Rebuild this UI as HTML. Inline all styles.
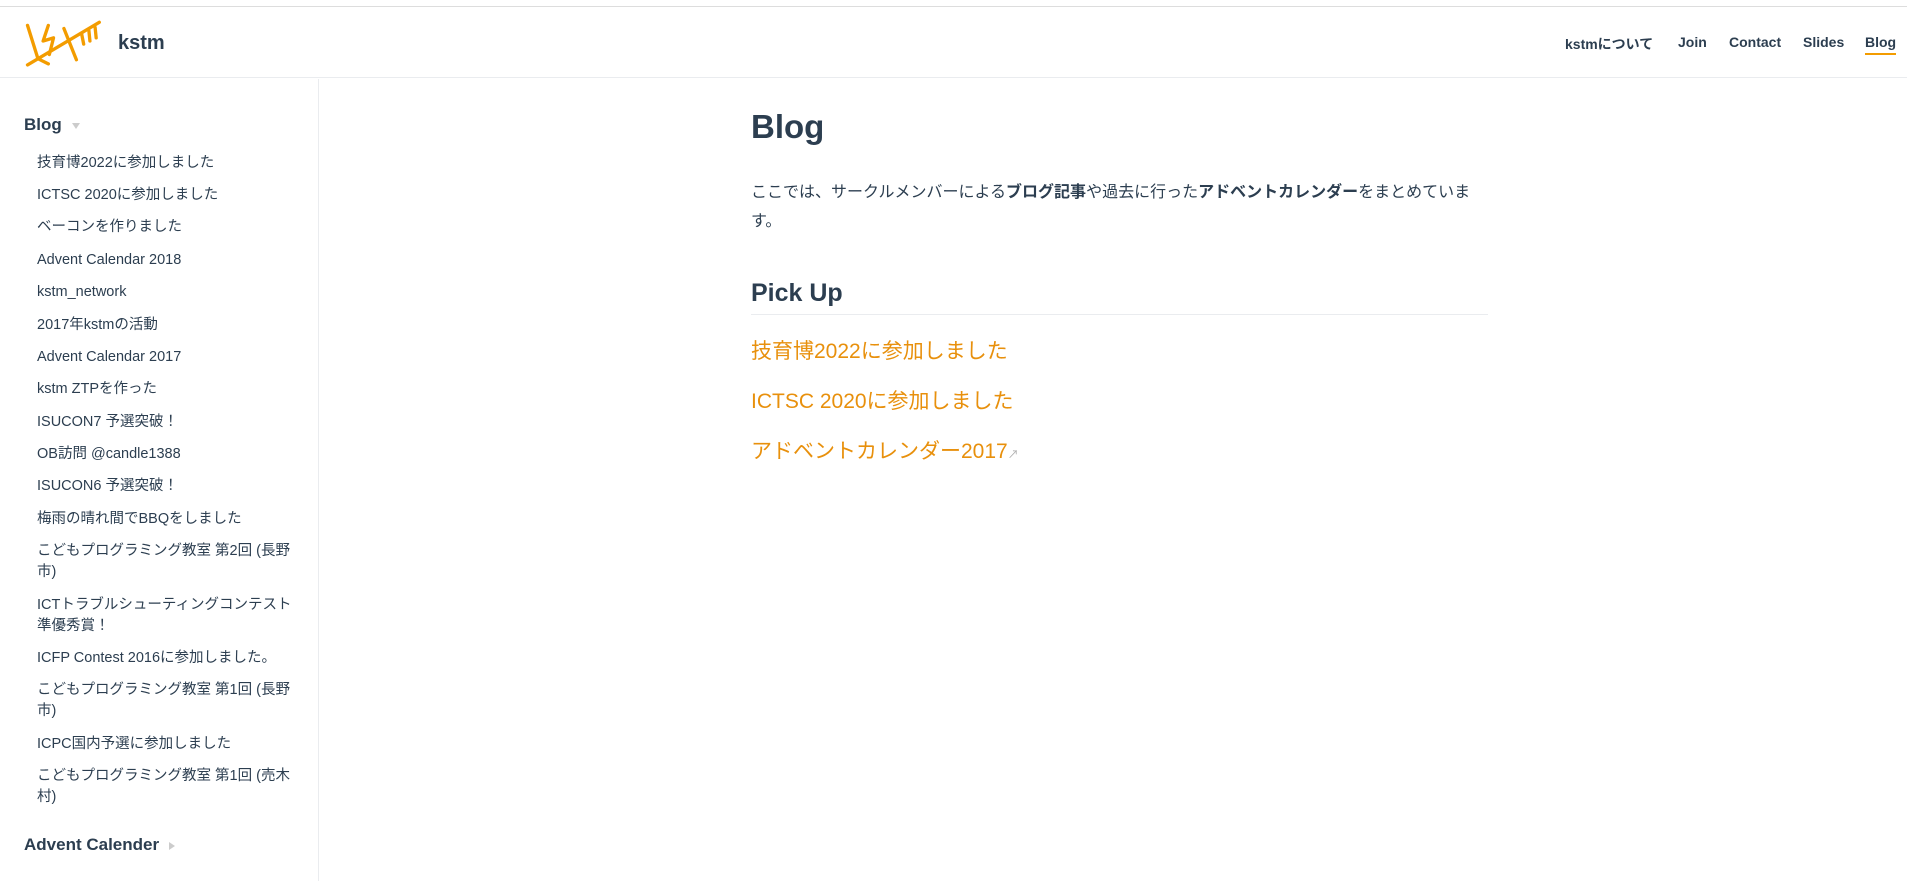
<!DOCTYPE html>
<html><head><meta charset="utf-8"><style>
*{margin:0;padding:0;box-sizing:border-box}
body{width:1907px;height:881px;overflow:hidden;background:#fff;font-family:"Liberation Sans","Noto Sans CJK JP",sans-serif;color:#2c3e50;position:relative}
.top{position:absolute;left:0;top:6px;width:1907px;height:72px;border-top:1px solid #ddd;border-bottom:1px solid #eaecef}
.brand{position:absolute;left:118px;top:25px;font-size:20px;font-weight:600}
.nav a{position:absolute;top:27px;font-size:14px;font-weight:600;color:#2c3e50;text-decoration:none}
.side{position:absolute;left:0;top:79px;width:319px;height:802px;border-right:1px solid #eaecef}
.side h3{position:absolute;left:24px;font-size:17px;font-weight:700}
.side ul{position:absolute;left:37px;width:262px;list-style:none}
.side li{font-size:14.5px;line-height:21px;padding:5.7px 0}
.tri{display:inline-block;margin-left:10px;vertical-align:middle}
.main{position:absolute;left:751px;top:107px;width:737px}
h1{font-size:33px;font-weight:600;line-height:1.2}
p{margin-top:31px;font-size:16px;line-height:29px}
h2{margin-top:43px;font-size:25px;font-weight:600;padding-bottom:6px;border-bottom:1px solid #eaecef}
.lk{display:block;color:#e8900c;font-size:21px;margin-top:22px;line-height:28px}
</style></head><body>
<div class="top">
<svg style="position:absolute;left:14px;top:2px" width="104" height="64" viewBox="0 0 100 60" fill="none" stroke="#f39c00" stroke-width="3.2" stroke-linecap="round" stroke-linejoin="round">
<path d="M13 15 L23 47"/><path d="M23 47 L33 52"/><path d="M33 15 L28 30 L38 27 L34 43"/><path d="M13 53 L82 12"/><path d="M48 18 L60 48"/><path d="M65 23 L67 33"/><path d="M72 20 L73 30"/><path d="M78 17 L79 27"/>
</svg>
<div class="brand">kstm</div>
<div class="nav">
<a style="left:1565px">kstmについて</a><a style="left:1678px">Join</a><a style="left:1729px">Contact</a><a style="left:1803px">Slides</a><a style="left:1865px;border-bottom:2px solid #f39c00;padding-bottom:3px">Blog</a>
</div></div>
<div class="side">
<h3 style="top:36px">Blog<span class="tri" style="border-left:4px solid transparent;border-right:4px solid transparent;border-top:6px solid #ccc"></span></h3>
<ul style="top:68px">
<li>技育博2022に参加しました</li><li>ICTSC 2020に参加しました</li><li>ベーコンを作りました</li><li>Advent Calendar 2018</li><li>kstm_network</li><li>2017年kstmの活動</li><li>Advent Calendar 2017</li><li>kstm ZTPを作った</li><li>ISUCON7 予選突破！</li><li>OB訪問 @candle1388</li><li>ISUCON6 予選突破！</li><li>梅雨の晴れ間でBBQをしました</li><li>こどもプログラミング教室 第2回 (長野市)</li><li>ICTトラブルシューティングコンテスト<br>準優秀賞！</li><li>ICFP Contest 2016に参加しました。</li><li>こどもプログラミング教室 第1回 (長野市)</li><li>ICPC国内予選に参加しました</li><li>こどもプログラミング教室 第1回 (売木村)</li>
</ul>
<h3 style="top:756px">Advent Calender<span class="tri" style="border-top:4px solid transparent;border-bottom:4px solid transparent;border-left:6px solid #ccc"></span></h3>
</div>
<div class="main">
<h1>Blog</h1>
<p>ここでは、サークルメンバーによる<b>ブログ記事</b>や過去に行った<b>アドベントカレンダー</b>をまとめています。</p>
<h2>Pick Up</h2>
<a class="lk" style="margin-top:23px">技育博2022に参加しました</a>
<a class="lk">ICTSC 2020に参加しました</a>
<a class="lk">アドベントカレンダー2017<span style="font-size:11px;color:#aaa">↗</span></a>
</div>
</body></html>
